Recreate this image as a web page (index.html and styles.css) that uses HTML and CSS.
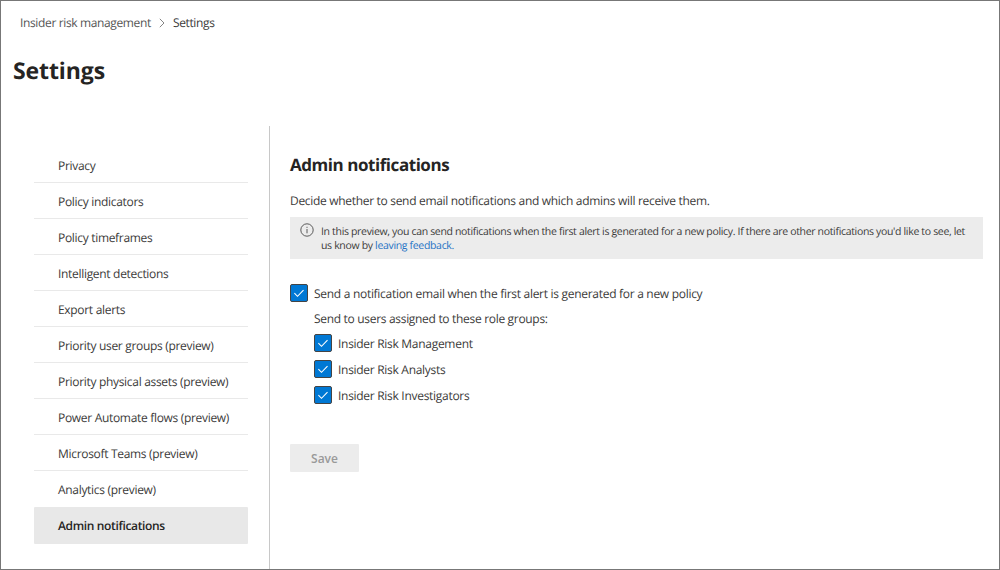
FILE: index.html
```html
<!DOCTYPE html>
<html lang="en">
<head>
<meta charset="utf-8">
<title>Settings - Insider risk management</title>
<link rel="stylesheet" href="styles.css">
</head>
<body>
<svg width="0" height="0" class="defs" aria-hidden="true">
  <symbol id="check" viewBox="0 0 16 16"><path d="M3.4 8.2l3.1 3.1 6-6.1" fill="none" stroke="#fff" stroke-width="1.1"/></symbol>
</svg>
<div class="page">
  <header class="header">
    <nav class="breadcrumb">
      <a class="crumb">Insider risk management</a>
      <svg class="chevron" width="6" height="10" viewBox="0 0 6 10"><path d="M.8 .8L5 5 .8 9.2" fill="none" stroke="#777" stroke-width="0.9"/></svg>
      <span class="crumb crumb-current">Settings</span>
    </nav>
    <h1 class="title">Settings</h1>
  </header>
  <div class="body">
    <aside class="sidebar">
      <ul class="menu">
        <li class="item"><span>Privacy</span></li>
        <li class="item"><span>Policy indicators</span></li>
        <li class="item"><span>Policy timeframes</span></li>
        <li class="item"><span>Intelligent detections</span></li>
        <li class="item"><span>Export alerts</span></li>
        <li class="item"><span>Priority user groups (preview)</span></li>
        <li class="item"><span>Priority physical assets (preview)</span></li>
        <li class="item"><span>Power Automate flows (preview)</span></li>
        <li class="item"><span>Microsoft Teams (preview)</span></li>
        <li class="item item-last"><span>Analytics (preview)</span></li>
        <li class="item item-selected"><span>Admin notifications</span></li>
      </ul>
    </aside>
    <main class="content">
      <h2 class="heading">Admin notifications</h2>
      <p class="lead">Decide whether to send email notifications and which admins will receive them.</p>
      <div class="info">
        <svg class="info-icon" width="14" height="14" viewBox="0 0 14 14"><circle cx="7" cy="7" r="6.2" fill="none" stroke="#4a4a4a" stroke-width="0.9"/><path d="M7 6v4.3M7 3.8v1.1" stroke="#4a4a4a" stroke-width="0.9"/></svg>
        <p class="info-text">In this preview, you can send notifications when the first alert is generated for a new policy. If there are other notifications you'd like to see, let<br>us know by <a class="link">leaving feedback.</a></p>
      </div>
      <label class="option"><svg class="box" width="18" height="18"><use href="#check"/></svg><span>Send a notification email when the first alert is generated for a new policy</span></label>
      <div class="group">
        <p class="group-title">Send to users assigned to these role groups:</p>
        <label class="option"><svg class="box" width="18" height="18"><use href="#check"/></svg><span>Insider Risk Management</span></label>
        <label class="option"><svg class="box" width="18" height="18"><use href="#check"/></svg><span>Insider Risk Analysts</span></label>
        <label class="option"><svg class="box" width="18" height="18"><use href="#check"/></svg><span>Insider Risk Investigators</span></label>
      </div>
      <button class="save" disabled>Save</button>
    </main>
  </div>
</div>
</body>
</html>
```
FILE: styles.css
```css
* { box-sizing: border-box; }
body {
  margin: 0;
  font: 12px/16px "Segoe UI", "Open Sans", "Noto Sans", sans-serif;
  letter-spacing: -0.31px;
  text-rendering: geometricPrecision;
  color: #3b3a39;
}
h1, h2, p, ul { margin: 0; padding: 0; }
.defs { position: absolute; }
.page {
  display: flex;
  flex-direction: column;
  height: 570px;
  border: 1px solid #777;
  background: #fff;
  overflow: hidden;
}
.header { height: 125px; padding: 14px 0 0 12px; }
.breadcrumb { display: flex; align-items: center; height: 16px; padding-left: 7px; }
.crumb { color: #555; letter-spacing: -0.36px; }
.crumb-current { color: #3b3a39; }
.chevron { margin: 0 8px; }
.title { margin-top: 23px; font-size: 23px; line-height: 32px; font-weight: 700; letter-spacing: -0.1px; color: #252423; }
.body { display: flex; flex: 1; }
.sidebar { flex: none; width: 269px; padding: 21px 0 0 33px; border-right: 1px solid #c8c8c8; }
.menu { width: 214px; list-style: none; }
.item {
  display: flex;
  align-items: center;
  height: 36px;
  padding: 2px 0 0 24px;
  border-bottom: 1px solid #e9e9e9;
}
.item-last { border-bottom-color: transparent; }
.item-selected {
  height: 37px;
  padding-top: 0;
  border: 0;
  border-radius: 1px;
  background: #e8e8e8;
  color: #252423;
  font-weight: 600;
  letter-spacing: -0.35px;
}
.content { flex: 1; min-width: 0; padding: 27px 16px 0 20px; }
.heading { font-size: 17px; line-height: 24px; font-weight: 700; letter-spacing: -0.45px; color: #252423; }
.lead { margin-top: 16px; }
.info {
  display: flex;
  gap: 7px;
  height: 42px;
  margin-top: 8px;
  padding: 6px 0 0 10px;
  background: #ececec;
}
.info-icon { flex: none; }
.info-text { padding-top: 2px; font-size: 10.5px; line-height: 14px; letter-spacing: -0.33px; white-space: nowrap; }
.link { color: #2672c4; }
.option { display: flex; align-items: center; gap: 6px; height: 18px; letter-spacing: -0.29px; }
.option span { padding-top: 2px; }
.info + .option { margin-top: 25px; }
.box { flex: none; border: 1px solid #444; border-radius: 2px; background: #0078d4; }
.group { padding-left: 24px; }
.group-title { margin: 9px 0 7px; }
.group .option { margin-bottom: 8px; }
.save {
  width: 69px;
  height: 28px;
  margin-top: 32px;
  padding: 2px 0 0;
  border: 0;
  border-radius: 1px;
  background: #ececec;
  color: #999;
  font: inherit;
  font-weight: 600;
}
```
